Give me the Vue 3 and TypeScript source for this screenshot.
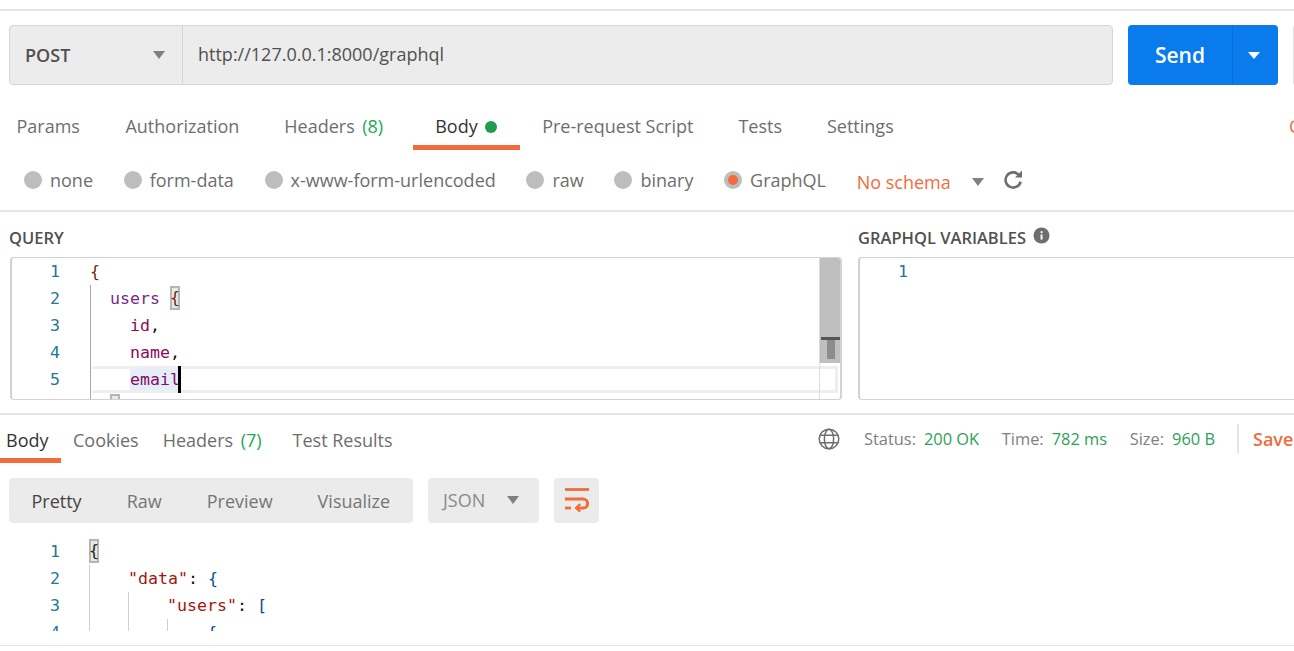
<script setup lang="ts">
const reqTabs = [
  { label: 'Params' }, { label: 'Authorization' }, { label: 'Headers', count: '(8)' },
  { label: 'Body', dot: true, active: true }, { label: 'Pre-request Script' }, { label: 'Tests' }, { label: 'Settings' },
]
const radios = ['none', 'form-data', 'x-www-form-urlencoded', 'raw', 'binary']
const views = ['Pretty', 'Raw', 'Preview', 'Visualize']
</script>

<template>
  <div class="app">
    <div class="topline"></div>

    <div class="urlrow">
      <div class="urlbox">
        <div class="method"><span>POST</span><i class="caret"></i></div>
        <div class="url">http://127.0.0.1:8000/graphql</div>
      </div>
      <div class="send">
        <span class="send-label">Send</span>
        <span class="send-drop"><i class="caret white"></i></span>
      </div>
      <div class="sliver"></div>
    </div>

    <div class="reqtabs">
      <div v-for="t in reqTabs" :key="t.label" class="reqtab" :class="{ active: t.active }">
        {{ t.label }}<span v-if="t.count" class="count">{{ t.count }}</span><i v-if="t.dot" class="dot"></i>
      </div>
      <span class="cookies-cut">C</span>
    </div>

    <div class="radios">
      <div v-for="r in radios" :key="r" class="radio"><i class="circle"></i>{{ r }}</div>
      <div class="radio"><i class="circle on"></i>GraphQL</div>
      <div class="schema">No schema</div>
      <i class="caret schema-caret"></i>
      <svg class="refresh" width="19" height="19" viewBox="0 0 19 19" fill="none">
        <path d="M14.6 4.6A7.6 7.6 0 1 0 16.6 11.6" stroke="#6e6e6e" stroke-width="2.6" />
        <path d="M18 0.5V7.6H11Z" fill="#6e6e6e" />
      </svg>
    </div>

    <div class="divider thick"></div>

    <div class="panes">
      <div class="pane left">
        <div class="panetitle">QUERY</div>
        <div class="editor">
          <div class="gutter"><div v-for="n in 5" :key="n" class="num">{{ n }}</div></div>
          <div class="code">
            <i class="guide"></i>
            <div class="cl"><span class="br">{</span></div>
            <div class="cl"><span class="ind1"></span><span class="fld">users</span> <span class="match br">{</span></div>
            <div class="cl"><span class="ind2"></span><span class="fld2">id</span><span class="pn">,</span></div>
            <div class="cl"><span class="ind2"></span><span class="fld2">name</span><span class="pn">,</span></div>
            <div class="cl current"><span class="ind3"></span><span class="sel fld2">email</span><i class="cursor"></i></div>
            <div class="cl"><span class="ind1"></span><i class="match closing"></i></div>
          </div>
          <div class="minimap"><i class="mm-line"></i><i class="mm-thumb"></i></div>
        </div>
      </div>
      <div class="pane right">
        <div class="panetitle">GRAPHQL VARIABLES
          <svg class="info" width="17" height="17" viewBox="0 0 17 17">
            <circle cx="8.5" cy="8.5" r="8" fill="#6e6e6e" />
            <rect x="7.6" y="7.4" width="1.9" height="5.2" fill="#fff" />
            <rect x="7.6" y="4.2" width="1.9" height="1.9" fill="#fff" />
          </svg>
        </div>
        <div class="editor vars">
          <div class="gutter"><div class="num">1</div></div>
        </div>
      </div>
    </div>

    <div class="divider resp"></div>

    <div class="resprow">
      <div class="resptabs">
        <div class="rtab active">Body</div>
        <div class="rtab">Cookies</div>
        <div class="rtab">Headers<span class="count">(7)</span></div>
        <div class="rtab">Test Results</div>
      </div>
      <div class="meta">
        <svg class="globe" width="22" height="22" viewBox="0 0 22 22" fill="none" stroke="#6e6e6e" stroke-width="1.5">
          <circle cx="11" cy="11" r="9.8" />
          <ellipse cx="11" cy="11" rx="4.6" ry="9.8" />
          <path d="M2.4 7.2H19.6M2.4 14.8H19.6" />
        </svg>
        <span class="mk first">Status:</span><span class="mv">200 OK</span>
        <span class="mk">Time:</span><span class="mv">782 ms</span>
        <span class="mk">Size:</span><span class="mv">960 B</span>
        <i class="vsep"></i>
        <span class="save">Save</span>
      </div>
    </div>

    <div class="toolbar">
      <div class="segment">
        <div v-for="(v, i) in views" :key="v" class="seg" :class="{ active: i === 0 }">{{ v }}</div>
      </div>
      <div class="format">JSON<i class="caret"></i></div>
      <div class="wrap">
        <svg width="24" height="24" viewBox="0 0 24 24" fill="none" stroke="#f26b3a" stroke-width="2.8">
          <path d="M0 1.5H24" />
          <path d="M0 11H19A4.6 4.6 0 0 1 19 20H11.5" />
          <path d="M0 20H6" />
          <path d="M15.2 16L11.2 20L15.2 23.6" stroke-width="2.4" />
        </svg>
      </div>
    </div>

    <div class="respcode">
      <div class="gutter rg"><div v-for="n in 4" :key="n" class="num">{{ n }}</div></div>
      <div class="code rc">
        <i class="rguide g1"></i><i class="rguide g2"></i><i class="rguide g3"></i>
        <div class="cl"><span class="match br2">{</span></div>
        <div class="cl"><span class="ind4"></span><span class="key">"data"</span><span class="pn">:</span> <span class="blue">{</span></div>
        <div class="cl"><span class="ind8"></span><span class="key">"users"</span><span class="pn">:</span> <span class="blue">[</span></div>
        <div class="cl"><span class="ind12"></span><span class="blue">{</span></div>
      </div>
    </div>

    <div class="divider bottom"></div>
  </div>
</template>

<style>
html, body { margin: 0; background: #fff; overflow: hidden; }
</style>

<style scoped>
.app { width: 1294px; height: 651px; overflow: hidden; background: #fff; font-family: "Open Sans", "Liberation Sans", sans-serif; font-size: 18px; color: #6e6e6e; padding-top: 9px; box-sizing: border-box; }
i { display: block; font-style: normal; }
.topline { height: 1.5px; background: #e6e6e6; }

.urlrow { display: flex; margin: 14.5px 0 0 9px; height: 60px; }
.urlbox { display: flex; width: 1104px; flex: none; box-sizing: border-box; background: #ececec; border: 1px solid #d6d6d6; border-radius: 4px; }
.method { width: 173px; flex: none; box-sizing: border-box; display: flex; align-items: center; justify-content: space-between; padding: 0 17px 0 15px; border-right: 1px solid #d6d6d6; font-weight: 600; color: #505050; }
.url { padding-left: 15px; line-height: 56px; color: #505050; }
.caret { width: 0; height: 0; border-left: 6.5px solid transparent; border-right: 6.5px solid transparent; border-top: 8px solid #808080; }
.caret.white { border-top-color: #fff; border-left-width: 6px; border-right-width: 6px; border-top-width: 7px; margin-left: -4px; }
.send { display: flex; flex: none; width: 150px; margin-left: 15px; background: #097bed; border-radius: 4px; color: #fff; font-weight: 600; font-size: 21px; }
.send-label { width: 105px; text-align: center; line-height: 60px; border-right: 1px solid #0a6fd4; box-sizing: border-box; }
.send-drop { flex: 1; display: flex; align-items: center; justify-content: center; }
.sliver { width: 2px; flex: none; margin-left: 15px; border: 1px solid #e0e0e0; border-right: 0; border-radius: 3px 0 0 3px; }

.reqtabs { display: flex; height: 65px; position: relative; box-sizing: border-box; }
.reqtab { padding: 26px 22.5px 0; height: 60px; box-sizing: border-box; line-height: 30px; white-space: nowrap; }
.reqtab:first-child { padding-left: 16.5px; padding-right: 23px; }
.reqtab.active { color: #333; border-bottom: 5px solid #f26b3a; height: 65px; margin-left: 7px; padding-left: 22.5px; padding-right: 23px; }
.count { color: #26a65b; margin-left: 7.5px; }
.dot { display: inline-block; width: 12px; height: 12px; border-radius: 50%; background: #1f9d4f; margin-left: 7px; }
.cookies-cut { position: absolute; left: 1289px; top: 26px; line-height: 30px; color: #f26b3a; }

.radios { display: flex; align-items: center; height: 60px; padding-left: 24px; }
.radio { display: flex; align-items: center; margin-right: 30.7px; white-space: nowrap; }
.circle { width: 18px; height: 18px; border-radius: 50%; background: #bdbdbd; margin-right: 8px; position: relative; }
.circle.on::after { content: ""; position: absolute; left: 4px; top: 4px; width: 10px; height: 10px; border-radius: 50%; background: #f26b3a; }
.schema { color: #f26b3a; margin-top: 4px; margin-right: 21px; }
.schema-caret { margin-top: 3px; margin-right: 20px; }
.refresh { margin-top: -1px; }

.divider { background: #e6e6e6; height: 2px; }
.panes { display: flex; height: 188px; }
.pane.left { width: 858px; flex: none; }
.pane.right { flex: 1; min-width: 0; }
.panetitle { height: 45px; padding: 14px 0 0 9px; box-sizing: border-box; font-size: 16.5px; font-weight: 600; line-height: 24px; color: #505050; position: relative; white-space: nowrap; }
.right .panetitle { padding-left: 0; }
.info { position: absolute; left: 175px; top: 15px; }
.editor { display: flex; height: 143px; width: 832px; margin-left: 10px; box-sizing: border-box; border: 1px solid #d2d2d2; border-left-width: 2px; border-right-width: 2px; border-radius: 4px; overflow: hidden; position: relative; }
.editor.vars { width: 440px; margin-left: 0; border-right: 0; border-radius: 4px 0 0 4px; }
.gutter { width: 78px; flex: none; text-align: right; padding-right: 30px; box-sizing: border-box; font-family: "DejaVu Sans Mono", monospace; font-size: 16.6px; color: #237893; }
.num { height: 27px; line-height: 27px; }
.code { flex: 1; position: relative; font-family: "DejaVu Sans Mono", monospace; font-size: 16.6px; color: #333; white-space: pre; }
.cl { height: 27px; line-height: 27px; position: relative; box-sizing: border-box; }
.cl.current { border-top: 3px solid #eeeeee; border-bottom: 3px solid #eeeeee; border-right: 3px solid #eeeeee; line-height: 21px; height: 27px; margin: 0 2px 0 2px; }
.cl.current .sel { background: #e3eefa; display: inline-block; height: 21px; }
.br { color: #7a1f10; }
.br2 { color: #222; }
.fld { color: #7a2a80; }
.fld2 { color: #8a0a60; }
.pn { color: #111; }
.key { color: #a31515; }
.blue { color: #0b4f8a; }
.ind1 { display: inline-block; width: 20px; }
.ind2 { display: inline-block; width: 40px; }
.ind3 { display: inline-block; width: 38px; }
.ind4 { display: inline-block; width: 39px; }
.ind8 { display: inline-block; width: 78px; }
.ind12 { display: inline-block; width: 118px; }
.match { background: #e4ebe3; box-shadow: inset 0 0 0 2px #b5b5b5; display: inline-block; height: 24px; line-height: 24px; vertical-align: top; margin-top: 1px; }
.match.closing { width: 10px; }
.guide { position: absolute; left: 0; top: 27px; bottom: 0; width: 1px; background: #a8a8a8; z-index: 1; }
.cursor { display: inline-block; width: 3px; height: 27px; background: #000; vertical-align: top; margin-top: -3px; margin-left: -2px; }
.minimap { position: absolute; right: 0; top: 0; bottom: 0; width: 21px; border-left: 1px solid #dcdcdc; box-sizing: border-box; }
.minimap::before { content: ""; position: absolute; left: 0; right: 0; top: 0; height: 105px; background: #bfbfbf; }
.mm-line { position: absolute; left: 1px; right: 0; top: 79px; height: 3px; background: #555; }
.mm-thumb { position: absolute; left: 7px; width: 8px; top: 82px; height: 19px; background: #8c8c8c; }

.divider.resp { height: 1.5px; margin-top: 13px; }
.resprow { display: flex; justify-content: space-between; height: 48px; }
.resptabs { display: flex; }
.rtab { padding: 10px 12px 0; height: 48px; box-sizing: border-box; line-height: 30px; white-space: nowrap; }
.rtab:first-child { padding: 10px 12px 0 6px; width: 61px; }
.rtab:nth-child(3) { padding-right: 19px; }
.rtab.active { color: #333; border-bottom: 5px solid #f26b3a; }
.meta { display: flex; align-items: center; height: 48px; font-size: 16.4px; white-space: nowrap; width: 476px; box-sizing: border-box; flex: none; overflow: hidden; }
.globe { margin-right: 24px; flex: none; }
.mk { color: #808080; margin-left: 22.7px; }
.mk.first { margin-left: 0; }
.mv { color: #2fa05a; margin-left: 8px; }
.vsep { width: 2px; height: 30px; background: #e6e6e6; margin: 0 14px 0 22px; flex: none; }
.save { color: #f26b3a; font-weight: 600; font-size: 18px; }

.toolbar { display: flex; margin: 15px 0 0 9px; height: 45px; }
.segment { display: flex; width: 404px; background: #ebebeb; border-radius: 4px; box-sizing: border-box; }
.seg { padding: 0 22.5px; line-height: 46px; color: #767676; }
.seg.active { color: #444; }
.format { display: flex; align-items: center; justify-content: space-between; width: 111px; margin-left: 15px; padding: 0 20px 0 15px; box-sizing: border-box; background: #ebebeb; border-radius: 4px; color: #8a8a8a; }
.wrap { width: 45px; margin-left: 15px; background: #ebebeb; border-radius: 4px; display: flex; align-items: center; justify-content: center; }

.respcode { display: flex; margin-top: 15px; height: 93px; overflow: hidden; }
.respcode .gutter { width: 60px; padding-right: 0; margin-right: 29px; }
.rguide { position: absolute; width: 1px; background: #cfcfcf; bottom: 0; }
.g1 { left: 0; top: 27px; }
.g2 { left: 39px; top: 54px; }
.g3 { left: 78px; top: 81px; }

.divider.bottom { margin-top: 14px; height: 1.5px; }
</style>
